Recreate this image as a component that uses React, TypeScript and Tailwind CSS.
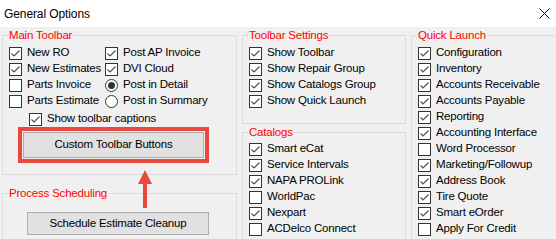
import React from "react";

function CheckBox({ checked }: { checked: boolean }) {
  return (
    <span className="flex h-[13px] w-[13px] shrink-0 items-center justify-center border border-[#333333] bg-white">
      {checked && (
        <svg width="11" height="11" viewBox="0 0 11 11">
          <polyline points="1.5,5.5 4,8 9.5,2.5" fill="none" stroke="#4d4d4d" strokeWidth="1.1" />
        </svg>
      )}
    </span>
  );
}

function Radio({ checked }: { checked: boolean }) {
  return (
    <span className="flex h-[13px] w-[13px] shrink-0 items-center justify-center rounded-full border border-[#333333] bg-white">
      {checked && <span className="h-[7px] w-[7px] rounded-full bg-[#333333]" />}
    </span>
  );
}

function Item({ label, checked, radio }: { label: string; checked: boolean; radio?: boolean }) {
  return (
    <div className="flex h-[16px] items-center gap-[5px] whitespace-nowrap">
      {radio ? <Radio checked={checked} /> : <CheckBox checked={checked} />}
      <span>{label}</span>
    </div>
  );
}

function Group({ title, className, children }: { title: string; className?: string; children: React.ReactNode }) {
  return (
    <fieldset className={`border border-[#dcdcdc] px-[6px] ${className ?? ""}`}>
      <legend className="-ml-[1px] px-[1px] leading-[14px] text-[#ff0000]">{title}</legend>
      {children}
    </fieldset>
  );
}

const toolbarSettings = ["Show Toolbar", "Show Repair Group", "Show Catalogs Group", "Show Quick Launch"];

const catalogs: [string, boolean][] = [
  ["Smart eCat", true],
  ["Service Intervals", true],
  ["NAPA PROLink", true],
  ["WorldPac", false],
  ["Nexpart", true],
  ["ACDelco Connect", false],
];

const quickLaunch: [string, boolean][] = [
  ["Configuration", true],
  ["Inventory", true],
  ["Accounts Receivable", true],
  ["Accounts Payable", true],
  ["Reporting", true],
  ["Accounting Interface", true],
  ["Word Processor", false],
  ["Marketing/Followup", true],
  ["Address Book", true],
  ["Tire Quote", true],
  ["Smart eOrder", true],
  ["Apply For Credit", false],
];

export default function App() {
  return (
    <div className="relative h-[239px] w-[556px] overflow-hidden bg-[#f0f0f0] font-['Liberation_Sans',sans-serif] text-[11.5px] tracking-[-0.2px] text-black">
      {/* title bar */}
      <div className="flex h-[27px] items-center justify-between bg-white pl-[4px] pr-[6px] text-[12px] tracking-[-0.1px]">
        <span>General Options</span>
        <svg width="11" height="11" viewBox="0 0 11 11">
          <path d="M0.5 0.5L10.5 10.5M10.5 0.5L0.5 10.5" stroke="#111" strokeWidth="1" />
        </svg>
      </div>

      <div className="flex gap-[5px] px-[2px] pt-[1px]">
        {/* left column */}
        <div className="flex w-[235px] shrink-0 flex-col">
          <Group title="Main Toolbar" className="pb-[11px] pt-[3px]">
            <div className="grid grid-cols-[96px_1fr]">
              <Item label="New RO" checked />
              <Item label="Post AP Invoice" checked />
              <Item label="New Estimates" checked />
              <Item label="DVI Cloud" checked />
              <Item label="Parts Invoice" checked={false} />
              <Item label="Post in Detail" checked radio />
              <Item label="Parts Estimate" checked={false} />
              <Item label="Post in Summary" checked={false} radio />
            </div>
            <div className="ml-[20px] mt-[2px]">
              <Item label="Show toolbar captions" checked />
            </div>
            <div className="ml-[9px] w-[191px] border-4 border-[#e8483d] p-[1px]">
              <button className="flex h-[26px] w-full items-center justify-center border border-[#adadad] bg-[#e1e1e1]">
                Custom Toolbar Buttons
              </button>
            </div>
          </Group>

          <Group title="Process Scheduling" className="mt-[11px] h-[80px] pt-[12px]">
            <button className="ml-[18px] flex h-[23px] w-[182px] items-center justify-center border border-[#adadad] bg-[#e1e1e1]">
              Schedule Estimate Cleanup
            </button>
          </Group>
        </div>

        {/* middle column */}
        <div className="flex w-[164px] shrink-0 flex-col">
          <Group title="Toolbar Settings" className="pb-[14px] pt-[3px]">
            {toolbarSettings.map((t) => (
              <Item key={t} label={t} checked />
            ))}
          </Group>
          <Group title="Catalogs" className="mt-[1px] h-[120px] pt-[2px]">
            {catalogs.map(([t, c]) => (
              <Item key={t} label={t} checked={c} />
            ))}
          </Group>
        </div>

        {/* right column */}
        <div className="flex w-[146px] shrink-0 flex-col">
          <Group title="Quick Launch" className="h-[230px] pt-[3px]">
            {quickLaunch.map(([t, c]) => (
              <Item key={t} label={t} checked={c} />
            ))}
          </Group>
        </div>
      </div>

      {/* annotation arrow */}
      <svg className="absolute left-[138px] top-[170px]" width="14" height="38" viewBox="0 0 14 38">
        <polygon points="7,0 14,14 0,14" fill="#e8483d" />
        <rect x="5" y="13" width="4" height="25" fill="#e8483d" />
      </svg>
    </div>
  );
}
